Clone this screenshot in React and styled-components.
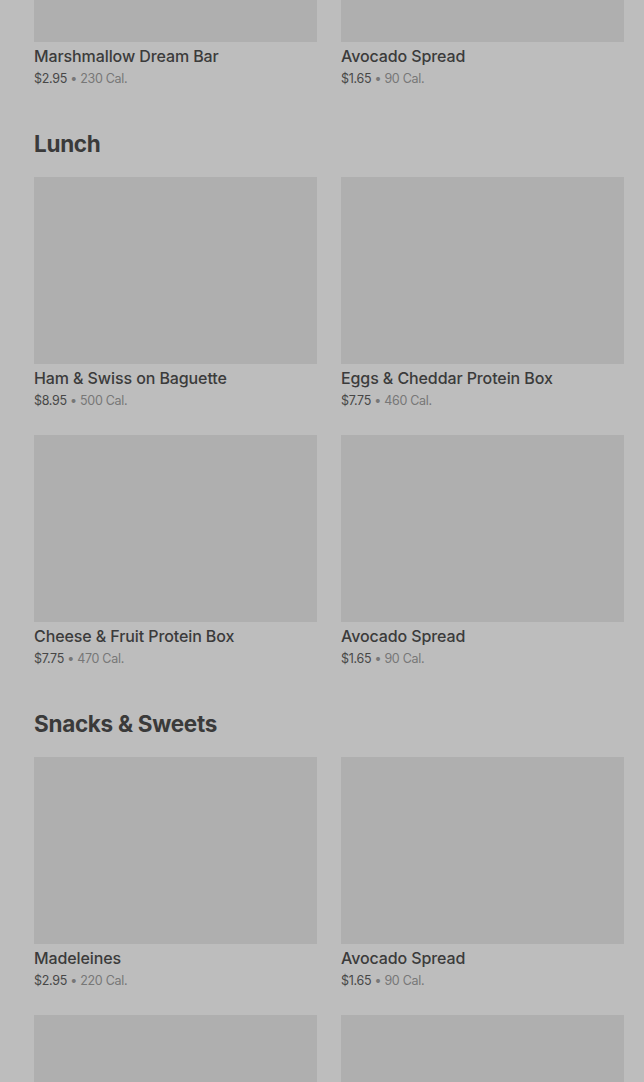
import React, { useLayoutEffect, useRef } from 'react';
import styled, { createGlobalStyle } from 'styled-components';

const sections = [
    {
        title: 'Bakery',
        items: [
            { name: 'Marshmallow Dream Bar', price: '$2.95', cal: 230 },
            { name: 'Avocado Spread', price: '$1.65', cal: 90 },
        ],
    },
    {
        title: 'Lunch',
        items: [
            { name: 'Ham & Swiss on Baguette', price: '$8.95', cal: 500 },
            { name: 'Eggs & Cheddar Protein Box', price: '$7.75', cal: 460 },
            { name: 'Cheese & Fruit Protein Box', price: '$7.75', cal: 470 },
            { name: 'Avocado Spread', price: '$1.65', cal: 90 },
        ],
    },
    {
        title: 'Snacks & Sweets',
        items: [
            { name: 'Madeleines', price: '$2.95', cal: 220 },
            { name: 'Avocado Spread', price: '$1.65', cal: 90 },
            { name: 'Lemon Loaf', price: '$3.45', cal: 470 },
            { name: 'Avocado Spread', price: '$1.65', cal: 90 },
        ],
    },
];

function App() {
    const listRef = useRef(null);
    const firstImage = useRef(null);

    // the list is shown scrolled, so the first row's pictures sit just above the top edge
    useLayoutEffect(() => {
        if (listRef.current && firstImage.current) {
            const img = firstImage.current;
            listRef.current.scrollTop = img.offsetTop + img.offsetHeight - 42;
        }
    }, []);

    return (
        <>
            <GlobalStyle />
            <Page ref={listRef}>
                <Menu>
                    {sections.map((section, si) => (
                        <Section key={section.title}>
                            <Heading>{section.title}</Heading>
                            <Grid>
                                {section.items.map((item, i) => (
                                    <Card key={i}>
                                        <Picture ref={si === 0 && i === 0 ? firstImage : null} />
                                        <Name>{item.name}</Name>
                                        <Meta>
                                            <Price>{item.price}</Price>
                                            <Cal> • {item.cal} Cal.</Cal>
                                        </Meta>
                                    </Card>
                                ))}
                            </Grid>
                        </Section>
                    ))}
                </Menu>
            </Page>
        </>
    );
}

export default App;

const GlobalStyle = createGlobalStyle`
    html, body{
        margin: 0;
        padding: 0;
        background: #bdbdbd;
    }
    *{
        box-sizing: border-box;
    }
`

const Page = styled.div`
    height: 100vh;
    overflow: hidden;
    background: #bdbdbd;
    font-family: Inter, "Noto Sans", sans-serif;
`

const Menu = styled.div`
    display: flex;
    flex-direction: column;
    gap: 38px;
    padding: 24px 20px 60px 34px;
`

const Section = styled.section`
    display: flex;
    flex-direction: column;
`

const Heading = styled.h2`
    margin: 0 0 16px;
    font-size: 22.5px;
    line-height: 34px;
    font-weight: 700;
    letter-spacing: -0.3px;
    color: #3a3a3a;
`

const Grid = styled.div`
    display: grid;
    grid-template-columns: 1fr 1fr;
    gap: 24px;
`

const Card = styled.div`
    display: flex;
    flex-direction: column;
`

const Picture = styled.div`
    height: 187px;
    background: #afafaf;
`

const Name = styled.div`
    margin-top: 2px;
    font-size: 16px;
    line-height: 24px;
    font-weight: 500;
    letter-spacing: -0.1px;
    color: #3b3b3b;
`

const Meta = styled.div`
    padding-top: 1px;
    font-size: 12.5px;
    line-height: 20px;
    letter-spacing: -0.3px;
`

const Price = styled.span`
    color: #474747;
`

const Cal = styled.span`
    color: #777;
`
